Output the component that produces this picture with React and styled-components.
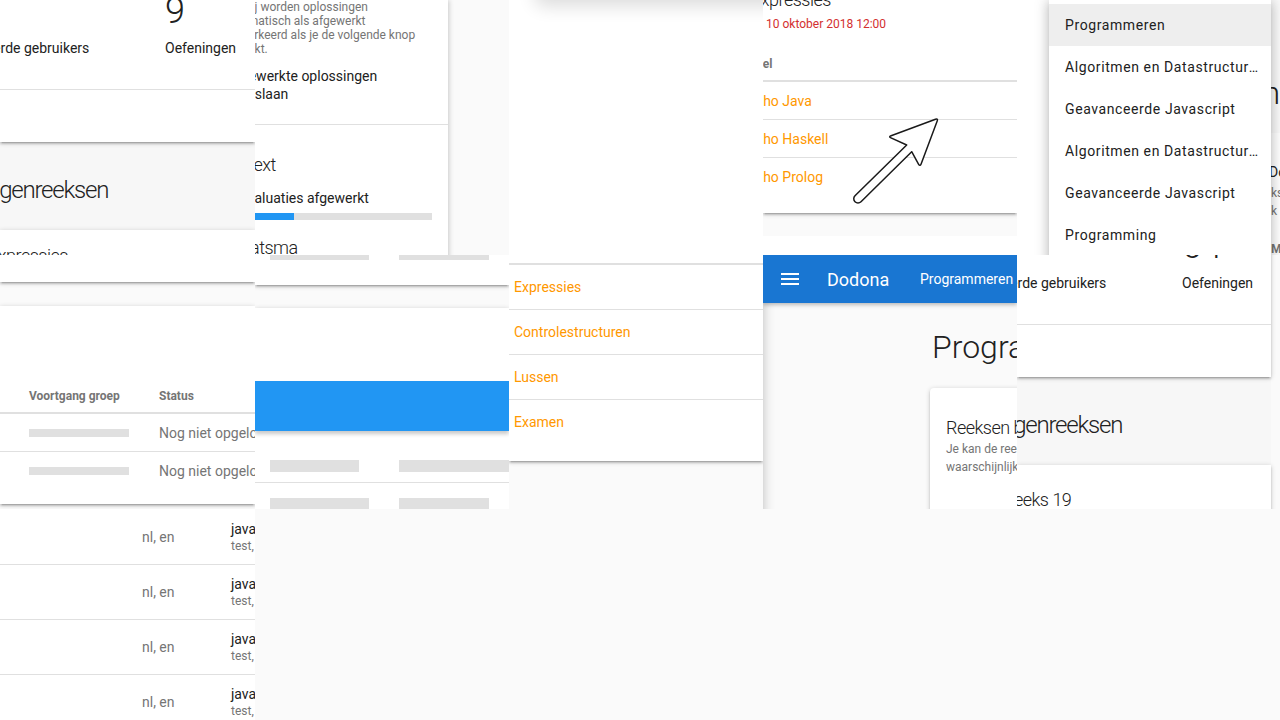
import React from "react";
import styled, { createGlobalStyle } from "styled-components";

const cardShadow =
  "0 2px 2px 0 rgba(0,0,0,0.14), 0 3px 1px -2px rgba(0,0,0,0.12), 0 1px 5px 0 rgba(0,0,0,0.2)";

const GlobalStyle = createGlobalStyle`
  html, body {
    margin: 0;
    padding: 0;
    background: #fafafa;
  }
  body {
    font-family: Roboto, "Noto Sans", "Liberation Sans", sans-serif;
    color: #212121;
  }
  * {
    box-sizing: border-box;
  }
`;

const Collage = styled.main`
  display: grid;
  grid-template-columns: 255px 254px 254px 254px 263px;
  grid-template-rows: 255px 254px 211px;
  width: 1280px;
  height: 720px;
  overflow: hidden;
  background: #fafafa;
`;

const Tile = styled.section`
  position: relative;
  display: flex;
  flex-direction: column;
  min-width: 0;
  overflow: hidden;
  isolation: isolate;
  background: ${(p) => p.$bg || "#fafafa"};
`;

const Shift = styled.span`
  display: block;
  margin-left: ${(p) => p.$x || 0}px;
  white-space: nowrap;
`;

/* ---------- course page (stats + series) ---------- */

const CoursePage = styled.div`
  flex-shrink: 0;
  width: ${(p) => p.$w}px;
  margin-top: ${(p) => p.$top}px;
`;

const StatsCard = styled.div`
  position: relative;
  z-index: 1;
  background: #fff;
  box-shadow: ${cardShadow};
`;

const StatsRow = styled.div`
  display: flex;
  margin-left: -71px;
  padding: 16px 0 31px;
  border-bottom: 1px solid #e0e0e0;
`;

const Stat = styled.div`
  flex: 0 0 ${(p) => p.$w}px;
`;

const StatNumber = styled.div`
  margin-top: -3px;
  font-size: 36px;
  font-weight: 300;
  line-height: 40px;
`;

const StatLabel = styled.div`
  margin-top: 7px;
  font-size: 14px;
  line-height: 20px;
  white-space: nowrap;
`;

const CardFooter = styled.div`
  height: 52px;
`;

const SectionBand = styled.div`
  height: 88px;
  padding-top: 32px;
  background: #f7f7f7;
`;

const SectionTitle = styled.h2`
  margin: 0 0 0 ${(p) => p.$shift}px;
  font-size: 24px;
  font-weight: 300;
  line-height: 32px;
  letter-spacing: -1.2px;
  white-space: nowrap;
`;

const SeriesCard = styled.div`
  position: relative;
  z-index: 1;
  height: 52px;
  padding-top: ${(p) => p.$pt}px;
  background: #fff;
  box-shadow: ${cardShadow};
`;

const LightTitle = styled.h3`
  margin: ${(p) => p.$mt || 0}px 0 0 ${(p) => p.$shift || 0}px;
  font-size: 18px;
  font-weight: 300;
  line-height: 28px;
  letter-spacing: -0.5px;
  white-space: nowrap;
`;

const CourseOverview = ({ top, width, exercises, series, seriesTop, seriesShift, sectionShift }) => (
  <CoursePage $top={top} $w={width}>
    <StatsCard>
      <StatsRow>
        <Stat $w={236}>
          <StatNumber>4</StatNumber>
          <StatLabel>Geregistreerde gebruikers</StatLabel>
        </Stat>
        <Stat $w={120}>
          <StatNumber>{exercises}</StatNumber>
          <StatLabel>Oefeningen</StatLabel>
        </Stat>
      </StatsRow>
      <CardFooter />
    </StatsCard>
    <SectionBand>
      <SectionTitle $shift={sectionShift}>Oefeningenreeksen</SectionTitle>
    </SectionBand>
    <SeriesCard $pt={seriesTop}>
      <LightTitle $shift={seriesShift}>{series}</LightTitle>
    </SeriesCard>
  </CoursePage>
);

/* ---------- settings card ---------- */

const SettingsCard = styled.div`
  position: relative;
  z-index: 1;
  flex: 1;
  width: 193px;
  background: #fff;
  box-shadow: 1px 0 5px rgba(0, 0, 0, 0.2);
`;

const Hint = styled.p`
  margin: 0;
  font-size: 12px;
  line-height: 14px;
  color: #757575;
`;

const ToggleLabel = styled.div`
  margin-top: 11px;
  padding-bottom: 21px;
  border-bottom: 1px solid #e0e0e0;
  font-size: 14px;
  line-height: 18px;
`;

const ProgressLabel = styled.div`
  margin-top: 9px;
  font-size: 14px;
  line-height: 20px;
`;

const Progress = styled.div`
  width: 209px;
  height: 7px;
  margin: 5px 0 0 -32px;
  background: #e0e0e0;
`;

const ProgressFill = styled.div`
  height: 100%;
  background: #2196f3;
`;

/* ---------- generic cards and tables ---------- */

const Card = styled.div`
  position: relative;
  z-index: 1;
  flex-shrink: 0;
  margin-top: ${(p) => p.$mt || 0}px;
  height: ${(p) => (p.$h ? `${p.$h}px` : "auto")};
  padding-top: ${(p) => p.$pt || 0}px;
  padding-bottom: ${(p) => p.$pb || 0}px;
  background: #fff;
  box-shadow: ${cardShadow};
`;

const Sheet = styled.div`
  flex-shrink: 0;
  height: 40px;
  margin: -40px -30px 0 26px;
  border-radius: 8px;
  background: #fff;
  box-shadow: 0 6px 18px rgba(0, 0, 0, 0.14);
`;

const HeadRow = styled.div`
  display: grid;
  grid-template-columns: ${(p) => p.$cols};
  align-items: center;
  height: 34px;
  margin-top: ${(p) => p.$mt || 0}px;
  padding-left: ${(p) => p.$pl || 0}px;
  border-bottom: 2px solid #e0e0e0;
  font-size: 12px;
  font-weight: 700;
  color: #757575;
  white-space: nowrap;
`;

const Row = styled.div`
  display: grid;
  flex-shrink: 0;
  grid-template-columns: ${(p) => p.$cols};
  align-items: center;
  height: ${(p) => p.$h || 38}px;
  margin-top: ${(p) => p.$mt || 0}px;
  padding-left: ${(p) => p.$pl || 0}px;
  border-bottom: 1px solid ${(p) => (p.$last ? "transparent" : "#e0e0e0")};
  font-size: 14px;
  white-space: nowrap;
`;

const Link = styled.span`
  color: #ff9800;
  margin-left: ${(p) => p.$shift || 0}px;
`;

const Muted = styled.span`
  color: #757575;
`;

const Bar = styled.div`
  flex-shrink: 0;
  width: ${(p) => p.$w}px;
  height: ${(p) => p.$h || 12}px;
  background: #e0e0e0;
`;

/* ---------- deadline card ---------- */

const Deadline = styled.div`
  margin: 2px 0 0 3px;
  font-size: 12px;
  line-height: 16px;
  color: #d32f2f;
  white-space: nowrap;
`;

const Arrow = styled.svg`
  position: absolute;
  left: 0;
  top: 0;
  z-index: 3;
  pointer-events: none;
`;

const WhiteFill = styled.div`
  flex: 1;
  margin-top: ${(p) => p.$mt || 0}px;
  background: #fff;
`;

/* ---------- menu ---------- */

const MenuLayout = styled.div`
  display: grid;
  grid-template-columns: 32px 222px 9px;
  height: 100%;
  background: #fff;
`;

const Menu = styled.ul`
  position: relative;
  z-index: 2;
  align-self: start;
  width: 222px;
  margin: -4px 0 0;
  padding: 8px 0;
  list-style: none;
  background: #fff;
  box-shadow: 0 5px 5px -3px rgba(0, 0, 0, 0.2), 0 8px 10px 1px rgba(0, 0, 0, 0.14),
    0 3px 14px 2px rgba(0, 0, 0, 0.12);
`;

const MenuItem = styled.li`
  display: block;
  height: 42px;
  padding: 0 10px 0 16px;
  font-size: 14px;
  line-height: 42px;
  letter-spacing: 0.6px;
  white-space: nowrap;
  overflow: hidden;
  text-overflow: ellipsis;
  background: ${(p) => (p.$active ? "#eeeeee" : "transparent")};
`;

const Peek = styled.div`
  display: flex;
  flex-direction: column;
  width: 9px;
  overflow: hidden;
`;

const PeekHead = styled.div`
  display: flex;
  flex-shrink: 0;
  justify-content: flex-end;
  height: 133px;
  padding-top: 73px;
  background: #fafafa;
`;

const PageHeading = styled.h1`
  flex-shrink: 0;
  margin: 0;
  font-size: 32px;
  font-weight: 300;
  line-height: 40px;
  white-space: nowrap;
`;

const PeekCard = styled.div`
  flex: 1;
  padding-top: 30px;
  background: #fff;
  white-space: nowrap;
`;

const PeekText = styled.div`
  margin: ${(p) => p.$mt || 0}px 0 0 ${(p) => p.$ml || 0}px;
  font-size: ${(p) => p.$size || 12}px;
  font-weight: ${(p) => (p.$bold ? 700 : 400)};
  line-height: 18px;
  color: ${(p) => (p.$muted ? "#757575" : "#212121")};
`;

/* ---------- app bar page ---------- */

const AppBar = styled.header`
  position: relative;
  z-index: 2;
  display: flex;
  align-items: center;
  flex-shrink: 0;
  height: 48px;
  padding-left: 18px;
  background: #1976d2;
  color: #fff;
  box-shadow: 0 2px 4px rgba(0, 0, 0, 0.25);
  white-space: nowrap;
`;

const Brand = styled.span`
  flex: 0 0 93px;
  margin-left: 28px;
  font-size: 18px;
`;

const Crumb = styled.span`
  font-size: 14px;
`;

const PageBody = styled.div`
  flex: 1;
  padding: 24px 0 0 169px;
  box-shadow: inset 10px 0 12px -10px rgba(0, 0, 0, 0.25);
`;

const InfoCard = styled.div`
  width: 240px;
  height: 200px;
  margin: 21px 0 0 -2px;
  padding: 28px 16px 0;
  border-radius: 4px;
  background: #fff;
  box-shadow: ${cardShadow};
  white-space: nowrap;
`;

const InfoTitle = styled.div`
  font-size: 18px;
  font-weight: 300;
  line-height: 24px;
  letter-spacing: -0.5px;
`;

const InfoText = styled.div`
  font-size: 12px;
  line-height: 18px;
  color: #757575;
`;

/* ---------- lists ---------- */

const ListTop = styled.div`
  height: 10px;
  border-bottom: 2px solid #e0e0e0;
`;

const Skeleton = styled.div`
  display: flex;
  gap: ${(p) => p.$gap}px;
  height: ${(p) => p.$h || 38}px;
  padding: ${(p) => p.$pt || 0}px 0 0 15px;
  border-bottom: 1px solid ${(p) => (p.$line ? "#e0e0e0" : "transparent")};
`;

const BlueBand = styled.div`
  position: relative;
  z-index: 1;
  height: 50px;
  margin-top: 73px;
  background: #2196f3;
  box-shadow: 0 3px 4px rgba(0, 0, 0, 0.22);
`;

const NameCell = styled.div`
  display: flex;
  flex-direction: column;
`;

const NameMain = styled.span`
  font-size: 14px;
  line-height: 18px;
  color: #212121;
`;

const NameTags = styled.span`
  font-size: 12px;
  line-height: 16px;
  color: #757575;
`;

const HamburgerIcon = () => (
  <svg width="18" height="12" viewBox="0 0 18 12">
    <rect x="0" y="0" width="18" height="2" fill="#fff" />
    <rect x="0" y="5" width="18" height="2" fill="#fff" />
    <rect x="0" y="10" width="18" height="2" fill="#fff" />
  </svg>
);

const courses = [
  "Programmeren",
  "Algoritmen en Datastructuren",
  "Geavanceerde Javascript",
  "Algoritmen en Datastructuren",
  "Geavanceerde Javascript",
  "Programming",
];

const series = ["Expressies", "Controlestructuren", "Lussen", "Examen"];

const echoes = ["Echo Java", "Echo Haskell", "Echo Prolog"];

export default function App() {
  return (
    <>
      <GlobalStyle />
      <Collage>
        {/* row 1 */}
        <Tile>
          <CourseOverview
            top={-22}
            width={255}
            exercises="9"
            series="Expressies"
            seriesTop={12}
            seriesShift={-12}
            sectionShift={-73}
          />
        </Tile>

        <Tile>
          <SettingsCard>
            <Hint>
              <Shift $x={-32}>Hierbij worden oplossingen</Shift>
              <Shift $x={-31}>automatisch als afgewerkt</Shift>
              <Shift $x={-31}>gemarkeerd als je de volgende knop</Shift>
              <Shift $x={-32}>aanklikt.</Shift>
            </Hint>
            <ToggleLabel>
              <Shift $x={-28}>Afgewerkte oplossingen</Shift>
              <Shift $x={-27}>overslaan</Shift>
            </ToggleLabel>
            <LightTitle $mt={26} $shift={-37}>
              Context
            </LightTitle>
            <ProgressLabel>
              <Shift $x={-15}>Evaluaties afgewerkt</Shift>
            </ProgressLabel>
            <Progress>
              <ProgressFill style={{ width: "34%" }} />
            </Progress>
            <LightTitle $mt={14} $shift={-5}>
              atsma
            </LightTitle>
          </SettingsCard>
        </Tile>

        <Tile $bg="#fff">
          <Sheet />
        </Tile>

        <Tile>
          <Card $mt={-14} $pb={17}>
            <LightTitle $shift={-12}>Expressies</LightTitle>
            <Deadline>10 oktober 2018 12:00</Deadline>
            <HeadRow $cols="1fr" $mt={16}>
              <Shift $x={-15}>Titel</Shift>
            </HeadRow>
            {echoes.map((name, i) => (
              <Row key={name} $cols="1fr" $last={i === echoes.length - 1}>
                <Link $shift={-15}>{name}</Link>
              </Row>
            ))}
          </Card>
          <WhiteFill $mt={23} />
          <Arrow width="254" height="255" viewBox="0 0 254 255">
            <path
              d="M148.7 151.7 L98 201.7 A4.2 4.2 0 0 1 92 195.7 L143.7 145 L128 137.9 Q125.3 136.7 128.1 135.7 L172.5 119.3 Q175.3 118.3 174.2 121.1 L158.1 163.9 Q157 166.7 155.5 164.1 Z"
              fill="#fff"
              stroke="#1a1a1a"
              strokeWidth="1.5"
              strokeLinejoin="round"
            />
          </Arrow>
        </Tile>

        <Tile $bg="#fff">
          <MenuLayout>
            <div />
            <Menu>
              {courses.map((c, i) => (
                <MenuItem key={i} $active={i === 0}>
                  {c}
                </MenuItem>
              ))}
            </Menu>
            <Peek>
              <PeekHead>
                <PageHeading>Programmeren</PageHeading>
              </PeekHead>
              <PeekCard>
                <PeekText $size={14} $ml={-2}>
                  Do
                </PeekText>
                <PeekText $muted $mt={3}>
                  ks
                </PeekText>
                <PeekText $muted>k h</PeekText>
                <PeekText $muted $bold $mt={20}>
                  M
                </PeekText>
              </PeekCard>
            </Peek>
          </MenuLayout>
        </Tile>

        {/* row 2 */}
        <Tile>
          <Card $h={27} />
          <Card $mt={24} $h={198} $pt={74}>
            <HeadRow $cols="130px 1fr" $pl={29}>
              <span>Voortgang groep</span>
              <span>Status</span>
            </HeadRow>
            {[0, 1].map((i) => (
              <Row key={i} $cols="130px 1fr" $pl={29} $last={i === 1}>
                <Bar $w={100} $h={8} />
                <Muted>Nog niet opgelost</Muted>
              </Row>
            ))}
          </Card>
        </Tile>

        <Tile>
          <Card $mt={-20} $h={50}>
            <Skeleton $gap={30} $h={50} $pt={13}>
              <Bar $w={99} />
              <Bar $w={90} />
            </Skeleton>
          </Card>
          <Card $mt={23} $h={260}>
            <BlueBand />
            <Skeleton $gap={40} $h={52} $pt={29} $line>
              <Bar $w={89} />
              <Bar $w={130} />
            </Skeleton>
            <Skeleton $gap={30} $h={38} $pt={15}>
              <Bar $w={99} />
              <Bar $w={90} />
            </Skeleton>
          </Card>
        </Tile>

        <Tile>
          <Card $h={206} $pb={16}>
            <ListTop />
            {series.map((s, i) => (
              <Row key={s} $cols="1fr" $h={45} $pl={5} $last={i === series.length - 1}>
                <Link>{s}</Link>
              </Row>
            ))}
          </Card>
        </Tile>

        <Tile>
          <AppBar>
            <HamburgerIcon />
            <Brand>Dodona</Brand>
            <Crumb>Programmeren</Crumb>
          </AppBar>
          <PageBody>
            <PageHeading>Programmeren</PageHeading>
            <InfoCard>
              <InfoTitle>Reeksen beheren</InfoTitle>
              <InfoText>Je kan de reeksen van deze cursus hier beheren.</InfoText>
              <InfoText>waarschijnlijk wil je eerst een nieuwe reeks maken.</InfoText>
            </InfoCard>
          </PageBody>
        </Tile>

        <Tile>
          <CourseOverview
            top={-42}
            width={254}
            exercises="64"
            series="Reeks 19"
            seriesTop={21}
            seriesShift={-14}
            sectionShift={-76}
          />
        </Tile>

        {/* row 3 */}
        <Tile $bg="#fff">
          {[0, 1, 2, 3].map((i) => (
            <Row key={i} $cols="89px 1fr" $h={55} $pl={142} $mt={i === 0 ? 1 : 0}>
              <Muted>nl, en</Muted>
              <NameCell>
                <NameMain>java</NameMain>
                <NameTags>test, java</NameTags>
              </NameCell>
            </Row>
          ))}
        </Tile>
      </Collage>
    </>
  );
}
